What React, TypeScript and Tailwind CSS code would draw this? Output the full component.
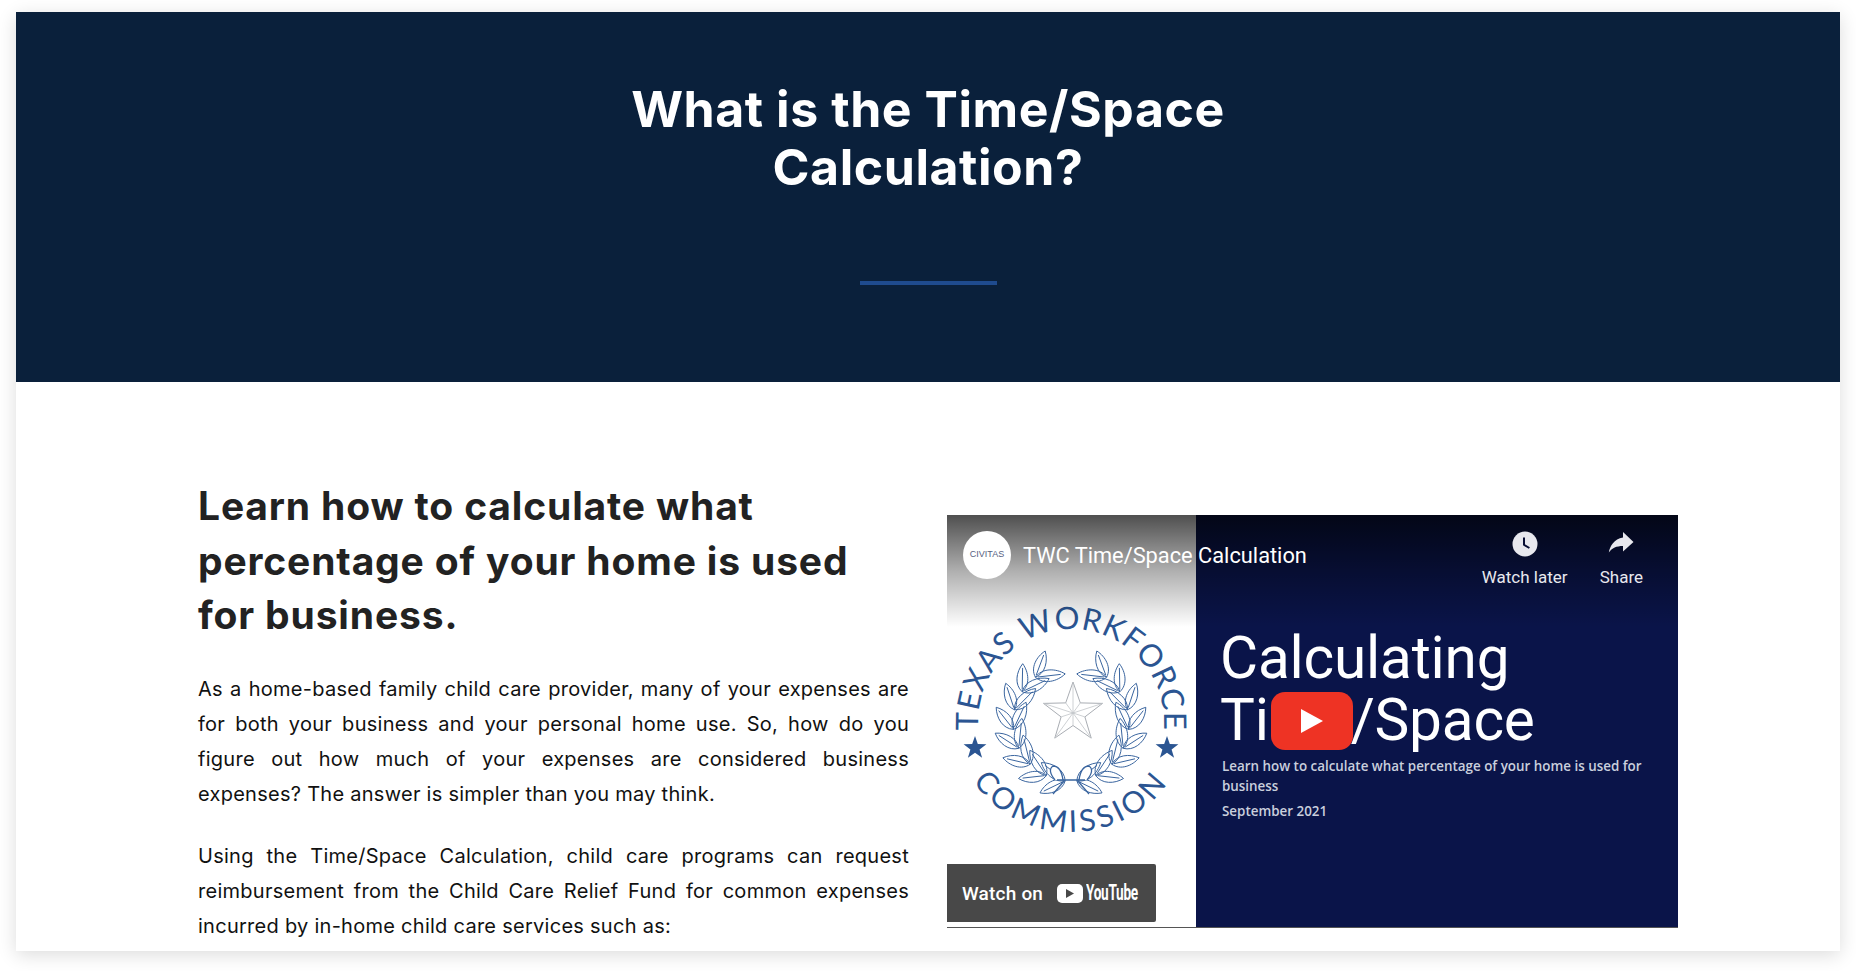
import React from "react";

const BODY = "font-['Inter','Liberation_Sans',sans-serif]";

function leafPath(x: number, y: number, angle: number, len: number, wid: number) {
  const c = Math.cos(angle), s = Math.sin(angle);
  const p = (u: number, v: number) => `${(x + u * c - v * s).toFixed(1)} ${(y + u * s + v * c).toFixed(1)}`;
  return `M${p(0, 0)} C${p(len * 0.25, -wid)} ${p(len * 0.7, -wid * 0.8)} ${p(len, 0)} C${p(len * 0.7, wid * 0.8)} ${p(len * 0.25, wid)} ${p(0, 0)} Z M${p(len * 0.08, 0)} L${p(len * 0.85, 0)}`;
}

function branch(side: 1 | -1) {
  const cx = 124, cy = 208, R = 58;
  const out: string[] = [];
  for (let i = 0; i < 8; i++) {
    const a = 0.1 + i * 0.34;
    const x = cx + side * R * Math.sin(a);
    const y = cy + R * Math.cos(a);
    const tangent = Math.atan2(-Math.sin(a), side * Math.cos(a));
    out.push(leafPath(x, y, tangent - side * 0.55, 30, 8.5));
    out.push(leafPath(x, y, tangent + side * 0.55, 28, 8));
  }
  return out.join(" ");
}

function starPoints(cx: number, cy: number, R: number, r: number) {
  const pts: string[] = [];
  for (let i = 0; i < 10; i++) {
    const a = -Math.PI / 2 + (i * Math.PI) / 5;
    const d = i % 2 === 0 ? R : r;
    pts.push(`${(cx + d * Math.cos(a)).toFixed(1)},${(cy + d * Math.sin(a)).toFixed(1)}`);
  }
  return pts.join(" ");
}

function facets(cx: number, cy: number, R: number, r: number) {
  let d = "";
  for (let i = 0; i < 10; i++) {
    const a = -Math.PI / 2 + (i * Math.PI) / 5;
    const q = i % 2 === 0 ? R : r;
    d += `M${cx} ${cy} L${(cx + q * Math.cos(a)).toFixed(1)} ${(cy + q * Math.sin(a)).toFixed(1)} `;
  }
  return d;
}

function Seal() {
  return (
    <svg className="absolute left-0 top-0" width="249" height="412" viewBox="0 0 249 412">
      <defs>
        <path id="sealTop" d="M 40 247 A 93 93 0 1 1 208 247" />
        <path id="sealBottom" d="M 8 208 A 116 109 0 0 0 240 208" />
      </defs>
      <text fill="#2b5592" fontFamily="Lato, sans-serif" fontSize="31" letterSpacing="0.7" textAnchor="middle">
        <textPath href="#sealTop" startOffset="50%">TEXAS WORKFORCE</textPath>
      </text>
      <text fill="#2b5592" fontFamily="Lato, sans-serif" fontSize="30" letterSpacing="3.4" textAnchor="middle">
        <textPath href="#sealBottom" startOffset="50%">COMMISSION</textPath>
      </text>
      <polygon points={starPoints(28, 233, 12, 4.8)} fill="#2b5592" />
      <polygon points={starPoints(220, 233, 12, 4.8)} fill="#2b5592" />
      <path d={branch(-1)} fill="#fff" stroke="#3a659f" strokeWidth="1" strokeLinejoin="round" />
      <path d={branch(1)} fill="#fff" stroke="#3a659f" strokeWidth="1" strokeLinejoin="round" />
      <polygon points={starPoints(126, 198, 31, 12.5)} fill="#fff" stroke="#a9adb3" strokeWidth="1" />
      <path d={facets(126, 198, 31, 12.5)} fill="none" stroke="#c2c5c9" strokeWidth="0.8" />
      <path d="M108 265 q-8 -10 -2 -14 q8 0 10 14 M140 265 q8 -10 2 -14 q-8 0 -10 14 M110 265 h28 M118 265 l-12 14 M130 265 l12 14" fill="#fff" stroke="#3a659f" strokeWidth="1.3" />
    </svg>
  );
}

function Thumbnail() {
  return (
    <div className="relative mt-9 flex h-[413px] w-[731px] shrink-0 overflow-hidden border-b border-[#555]">
      <div className="relative w-[249px] shrink-0 bg-white">
        <Seal />
      </div>
      <div className="flex flex-1 flex-col bg-[#0a1449] pl-[26px] pt-[112px] font-['Roboto',sans-serif] text-white">
        <div className="-ml-[2px] text-[58.5px] font-normal leading-[62px] tracking-[-0.2px]">Calculating</div>
        <div className="-ml-[2px] text-[58.5px] font-normal leading-[62px] tracking-[-0.2px]">Time/Space</div>
        <div className="mt-[5px] w-[440px] font-['Open_Sans',sans-serif] text-[13.4px] font-semibold leading-[20px] text-[#c9cfdd]">
          Learn how to calculate what percentage of your home is used for business
        </div>
        <div className="mt-[5px] font-['Open_Sans',sans-serif] text-[13.4px] font-semibold leading-[20px] text-[#c9cfdd]">
          September 2021
        </div>
      </div>

      {/* YouTube overlay */}
      <div className="absolute inset-x-0 top-0 h-[112px] bg-gradient-to-b from-[#000000b0] via-[#00000050] to-transparent" />
      <div className="absolute left-[16px] top-[14px] flex items-center font-['Roboto',sans-serif] text-white">
        <div className="flex h-12 w-12 items-center justify-center rounded-full bg-white font-['Liberation_Sans',sans-serif] text-[9px] text-[#56617f]">
          CIVITAS
        </div>
        <div className="ml-[12px] mt-[3px] whitespace-nowrap text-[21.8px] leading-[48px]">TWC Time/Space Calculation</div>
      </div>
      <div className="absolute right-[35px] top-[16px] flex gap-[31px] font-['Roboto',sans-serif] text-[17px] font-normal text-[#e8e8ee]">
        <div className="flex w-[88px] flex-col items-center">
          <svg width="26" height="26" viewBox="0 0 26 26">
            <circle cx="13" cy="13" r="12.5" fill="#e8e8ee" />
            <path d="M12 6.5v7.3l5.4 3.2" fill="none" stroke="#080e35" strokeWidth="2" />
          </svg>
          <span className="mt-[10px] whitespace-nowrap leading-[20px]">Watch later</span>
        </div>
        <div className="flex flex-col items-center">
          <svg width="26" height="26" viewBox="0 0 26 26">
            <path d="M15 6.5V1l10.5 10L15 20.5V15C8.5 15 4 17 .8 21.5 2 15 6 8 15 6.5Z" fill="#e8e8ee" />
          </svg>
          <span className="mt-[10px] leading-[20px]">Share</span>
        </div>
      </div>
      <div className="absolute left-[324px] top-[177px] flex h-[58px] w-[82px] items-center justify-center rounded-[14px] bg-[#ee3324]">
        <svg width="24" height="26" viewBox="0 0 24 26"><path d="M1 1l22 12L1 25Z" fill="#fff" /></svg>
      </div>
      <div className="absolute bottom-[5px] left-0 flex h-[58px] w-[209px] items-center rounded-r-[2px] bg-[#484848] pl-[15px] font-['Roboto',sans-serif] text-white">
        <span className="whitespace-nowrap text-[19px] font-medium leading-none tracking-[0.2px]">Watch on</span>
        <span className="ml-[14px] flex h-[19px] w-[26px] shrink-0 items-center justify-center rounded-[5px] bg-white">
          <svg width="8" height="9" viewBox="0 0 8 9"><path d="M0 0l8 4.5L0 9Z" fill="#484848" /></svg>
        </span>
        <span className="ml-[3px] origin-left scale-x-[0.62] text-[22px] font-bold leading-none tracking-[-0.5px]">YouTube</span>
      </div>
    </div>
  );
}

export default function App() {
  return (
    <div className="h-[971px] w-[1856px] overflow-hidden bg-white pt-3">
      <div className="mx-4 h-[939px] overflow-hidden bg-white shadow-[0_4px_18px_rgba(0,0,0,0.14)]">
        <header className="flex h-[370px] flex-col items-center bg-[#0a203b] pt-[68px]">
          <h1 className={`${BODY} w-[700px] text-center text-[50px] font-bold leading-[58px] tracking-[0.55px] text-white`}>
            What is the Time/Space<br />Calculation?
          </h1>
          <div className="mt-[85px] h-1 w-[137px] bg-[#1f4b8e]" />
        </header>
        <section className="flex gap-[38px] pl-[182px] pr-[162px] pt-[97px]">
          <div className={`${BODY} w-[711px] shrink-0`}>
            <h2 className="mb-[29px] w-[680px] text-[39px] font-bold leading-[54.5px] tracking-[0.85px] text-[#222]">
              Learn how to calculate what percentage of your home is used for business.
            </h2>
            <p className="mb-[27px] text-justify text-[20px] leading-[35px] tracking-[0.27px] text-[#111]">
              As a home-based family child care provider, many of your expenses are for both your business and your personal home use. So, how do you figure out how much of your expenses are considered business expenses? The answer is simpler than you may think.
            </p>
            <p className="text-justify text-[20px] leading-[35px] tracking-[0.27px] text-[#111]">
              Using the Time/Space Calculation, child care programs can request reimbursement from the Child Care Relief Fund for common expenses incurred by in-home child care services such as:
            </p>
          </div>
          <Thumbnail />
        </section>
      </div>
    </div>
  );
}
